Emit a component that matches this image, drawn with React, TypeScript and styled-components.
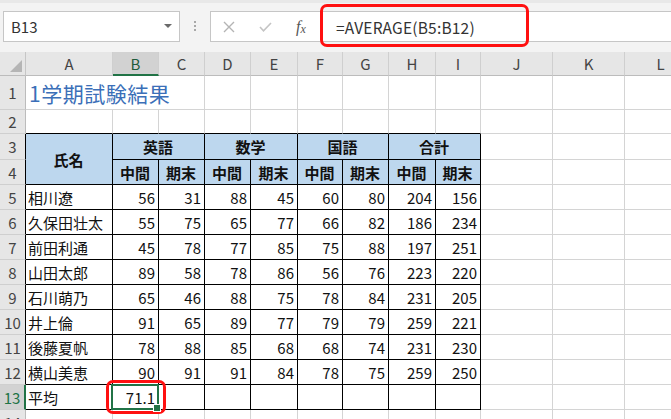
import { Fragment } from "react";
import { createGlobalStyle, css, styled } from "styled-components";

const GREEN = "#217346";
const GRID = "#d4d4d4";

const LETTERS = ["A", "B", "C", "D", "E", "F", "G", "H", "I", "J", "K", "L"];
const COLS = [26, 87, 46, 46, 46, 47, 45, 46, 47, 45, 72, 72, 72];
const SUBJECTS = ["英語", "数学", "国語", "合計"];

const ROWS: [number, string, number[]][] = [
  [5, "相川遼", [56, 31, 88, 45, 60, 80, 204, 156]],
  [6, "久保田壮太", [55, 75, 65, 77, 66, 82, 186, 234]],
  [7, "前田利通", [45, 78, 77, 85, 75, 88, 197, 251]],
  [8, "山田太郎", [89, 58, 78, 86, 56, 76, 223, 220]],
  [9, "石川萌乃", [65, 46, 88, 75, 78, 84, 231, 205]],
  [10, "井上倫", [91, 65, 89, 77, 79, 79, 259, 221]],
  [11, "後藤夏帆", [78, 88, 85, 68, 68, 74, 231, 230]],
  [12, "横山美恵", [90, 91, 91, 84, 78, 75, 259, 250]],
];

const Blanks = ({ n }: { n: number }) => (
  <>
    {Array.from({ length: n }, (_, i) => (
      <Cell key={i} />
    ))}
  </>
);

const App = () => {
  return (
    <Page>
      <GlobalStyle />
      <Toolbar>
        <NameBox>
          B13
          <Caret />
        </NameBox>
        <Grip>
          <i />
          <i />
          <i />
        </Grip>
        <FormulaBar>
          <ToolIcon>
            <svg width="12" height="12" viewBox="0 0 12 12">
              <path d="M1 1L11 11M11 1L1 11" stroke="#b4b4b4" strokeWidth="1.4" fill="none" />
            </svg>
          </ToolIcon>
          <ToolIcon>
            <svg width="13" height="10" viewBox="0 0 13 10">
              <path d="M1 5L4.5 8.8L12 1" stroke="#c4c4c4" strokeWidth="1.6" fill="none" />
            </svg>
          </ToolIcon>
          <ToolIcon>
            <Fx>
              f<sub>x</sub>
            </Fx>
          </ToolIcon>
          <Formula>=AVERAGE(B5:B12)</Formula>
        </FormulaBar>
      </Toolbar>

      <Sheet>
        <Corner />
        {LETTERS.map((l) => (
          <ColHead key={l} $active={l === "B"}>
            {l}
          </ColHead>
        ))}

        <RowHead>1</RowHead>
        <Title $span={3}>1学期試験結果</Title>
        <Blanks n={9} />

        <RowHead>2</RowHead>
        {LETTERS.map((l, i) => (
          <Cell key={l} $edge={i < 9} />
        ))}

        <RowHead $edge>3</RowHead>
        <Cell $black $head $rows={2} $align="center">
          氏名
        </Cell>
        {SUBJECTS.map((s) => (
          <Cell key={s} $black $head $span={2} $align="center">
            {s}
          </Cell>
        ))}
        <Blanks n={3} />

        <RowHead $edge>4</RowHead>
        {SUBJECTS.map((s) => (
          <Fragment key={s}>
            <Cell $black $head $align="center">
              中間
            </Cell>
            <Cell $black $head $align="center">
              期末
            </Cell>
          </Fragment>
        ))}
        <Blanks n={3} />

        {ROWS.map(([n, name, scores]) => (
          <Fragment key={n}>
            <RowHead $edge>{n}</RowHead>
            <Cell $black>{name}</Cell>
            {scores.map((v, i) => (
              <Cell key={i} $black $align="right">
                {v}
              </Cell>
            ))}
            <Blanks n={3} />
          </Fragment>
        ))}

        <RowHead $edge $active>
          13
        </RowHead>
        <Cell $black>平均</Cell>
        <Cell $black $align="right" $sel>
          71.1
        </Cell>
        {Array.from({ length: 7 }, (_, i) => (
          <Cell key={i} $black />
        ))}
        <Blanks n={3} />

        <RowHead>14</RowHead>
        <Blanks n={12} />
      </Sheet>

      <Mark $x={320} $y={4} $w={209} $h={43} />
      <Mark $x={106} $y={380} $w={60} $h={34} />
    </Page>
  );
};

export default App;

const GlobalStyle = createGlobalStyle`
  * { box-sizing: border-box; }
  body {
    margin: 0;
    overflow: hidden;
    background: #fff;
    font-family: "Noto Sans CJK JP", "Noto Sans", sans-serif;
  }
`;

const Page = styled.div`
  position: relative;
  width: 671px;
  height: 419px;
  overflow: hidden;
`;

const Toolbar = styled.div`
  display: flex;
  align-items: flex-start;
  height: 52px;
  padding: 8px 0 0 3px;
  background: #f3f3f3;
  border-top: 3px solid #e8e8e8;
`;

const NameBox = styled.div`
  position: relative;
  display: flex;
  align-items: center;
  width: 177px;
  height: 31px;
  padding-left: 7px;
  background: #fff;
  border: 1px solid #c6c6c6;
  font-size: 15px;
  color: #333;
`;

const Caret = styled.span`
  position: absolute;
  right: 7px;
  top: 12px;
  border-left: 4px solid transparent;
  border-right: 4px solid transparent;
  border-top: 4px solid #6a6a6a;
`;

const Grip = styled.div`
  display: flex;
  flex-direction: column;
  gap: 2px;
  width: 30px;
  align-items: center;
  padding-top: 10px;

  i {
    display: block;
    width: 2px;
    height: 2px;
    background: #a8a8a8;
  }
`;

const FormulaBar = styled.div`
  display: flex;
  align-items: center;
  flex: 1;
  height: 31px;
  background: #fff;
  border: 1px solid #c6c6c6;
  border-right: none;
`;

const ToolIcon = styled.div`
  display: flex;
  align-items: center;
  justify-content: center;
  width: 36px;
  height: 100%;
`;

const Fx = styled.span`
  font-family: "Liberation Serif", serif;
  font-style: italic;
  font-size: 16px;
  color: #555;
  line-height: 1;

  sub {
    font-size: 12px;
    vertical-align: -1px;
  }
`;

const Formula = styled.div`
  padding-left: 17px;
  font-size: 15.5px;
  letter-spacing: 0.2px;
  color: #333;
`;

const Sheet = styled.div`
  display: grid;
  grid-template-columns: ${COLS.map((c) => `${c}px`).join(" ")};
  grid-template-rows: 24px 34px 24px 26px 25px repeat(10, 25px);
  width: max-content;
`;

const Corner = styled.div`
  position: relative;
  background: #e6e6e6;
  border-right: 1px solid #c6c6c6;
  border-bottom: 1px solid #bcbcbc;

  &::after {
    content: "";
    position: absolute;
    right: 3px;
    bottom: 3px;
    border-left: 12px solid transparent;
    border-bottom: 12px solid #b5b5b5;
  }
`;

const ColHead = styled.div<{ $active?: boolean }>`
  display: flex;
  align-items: center;
  justify-content: center;
  font-size: 15px;
  color: ${(p) => (p.$active ? "#1f5c3a" : "#444")};
  background: ${(p) => (p.$active ? "#d2d2d2" : "#e6e6e6")};
  border-right: 1px solid #cfcfcf;
  border-bottom: ${(p) => (p.$active ? `2px solid ${GREEN}` : "1px solid #bcbcbc")};
`;

const RowHead = styled.div<{ $active?: boolean; $edge?: boolean }>`
  display: flex;
  align-items: center;
  justify-content: center;
  font-size: 15px;
  color: ${(p) => (p.$active ? GREEN : "#444")};
  background: ${(p) => (p.$active ? "#d2d2d2" : "#e6e6e6")};
  border-bottom: 1px solid #cfcfcf;
  border-right: ${(p) =>
    p.$active ? `2px solid ${GREEN}` : `1px solid ${p.$edge ? "#000" : "#bcbcbc"}`};
`;

type CellProps = {
  $black?: boolean;
  $edge?: boolean;
  $head?: boolean;
  $sel?: boolean;
  $align?: "left" | "right" | "center";
  $span?: number;
  $rows?: number;
};

const justify = { left: "flex-start", right: "flex-end", center: "center" };

const Cell = styled.div<CellProps>`
  position: relative;
  display: flex;
  align-items: center;
  justify-content: ${(p) => justify[p.$align ?? "left"]};
  grid-column: span ${(p) => p.$span ?? 1};
  grid-row: span ${(p) => p.$rows ?? 1};
  padding: 0 3px 0 2px;
  white-space: nowrap;
  font-size: 15px;
  font-weight: ${(p) => (p.$head ? 700 : 400)};
  color: #111;
  background: ${(p) => (p.$head ? "#bdd7ee" : "#fff")};
  border-right: 1px solid ${(p) => (p.$black ? "#000" : GRID)};
  border-bottom: 1px solid ${(p) => (p.$black || p.$edge ? "#000" : GRID)};

  ${(p) =>
    p.$sel &&
    css`
      &::after {
        content: "";
        position: absolute;
        inset: -1px -1px -1px -2px;
        border: 2px solid ${GREEN};
        pointer-events: none;
      }
      &::before {
        content: "";
        position: absolute;
        right: -3px;
        bottom: -3px;
        width: 6px;
        height: 6px;
        background: ${GREEN};
        border: 1px solid #fff;
        z-index: 1;
      }
    `}
`;

const Title = styled(Cell)`
  font-size: 21px;
  letter-spacing: 0.5px;
  color: #3b6fb8;
  padding-left: 3px;
`;

const Mark = styled.div<{ $x: number; $y: number; $w: number; $h: number }>`
  position: absolute;
  left: ${(p) => p.$x}px;
  top: ${(p) => p.$y}px;
  width: ${(p) => p.$w}px;
  height: ${(p) => p.$h}px;
  border: 3px solid #ff1010;
  border-radius: 7px;
  pointer-events: none;
`;
